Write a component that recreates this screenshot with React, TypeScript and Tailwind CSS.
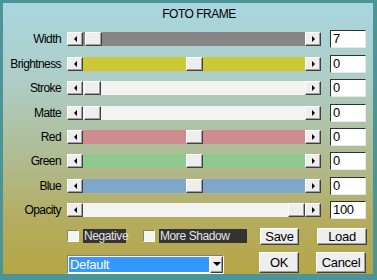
import React from 'react';

// スライダー行の定義（サムの位置はトラック左端からのpx）
interface SliderRow {
  label: string;
  track: string;
  thumb: number;
  value: string;
}

const ROWS: SliderRow[] = [
  { label: 'Width', track: 'bg-[#868686]', thumb: 2, value: '7' },
  { label: 'Brightness', track: 'bg-[#cec834]', thumb: 103, value: '0' },
  { label: 'Stroke', track: 'bg-[#f3f3f1]', thumb: 1, value: '0' },
  { label: 'Matte', track: 'bg-[#f3f3f1]', thumb: 1, value: '0' },
  { label: 'Red', track: 'bg-[#cd8d8f]', thumb: 103, value: '0' },
  { label: 'Green', track: 'bg-[#90c890]', thumb: 103, value: '0' },
  { label: 'Blue', track: 'bg-[#7fa7cc]', thumb: 103, value: '0' },
  { label: 'Opacity', track: 'bg-[#f3f3f1]', thumb: 205, value: '100' },
];

const raised =
  'bg-[#eeeeee] border border-t-white border-l-white border-b-[#404040] border-r-[#404040] shadow-[inset_-1px_-1px_0_#a0a0a0]';

const ArrowButton: React.FC<{ dir: 'left' | 'right' }> = ({ dir }) => (
  <div className={`w-[16px] h-[14px] flex items-center justify-center ${raised}`}>
    {dir === 'left' ? (
      <div className="w-0 h-0 border-y-[3px] border-y-transparent border-r-[3px] border-r-black" />
    ) : (
      <div className="w-0 h-0 border-y-[3px] border-y-transparent border-l-[3px] border-l-black" />
    )}
  </div>
);

const Slider: React.FC<{ row: SliderRow }> = ({ row }) => (
  <div className="flex h-[24.4px] items-center">
    <div className="w-[58px] text-right text-[12px] tracking-[-0.6px] text-black leading-none">
      {row.label}
    </div>
    <div className="ml-[6px] flex w-[254px]">
      <ArrowButton dir="left" />
      <div className={`flex-1 h-[14px] ${row.track}`}>
        <div className={`w-[17px] h-[14px] ${raised}`} style={{ marginLeft: row.thumb }} />
      </div>
      <ArrowButton dir="right" />
    </div>
    <div className="ml-[9px] w-[36px] h-[18px] bg-white border border-t-[#303030] border-l-[#303030] border-b-[#e8e8e8] border-r-[#e8e8e8] text-[13px] leading-[16px] pl-[2px] tracking-[-0.3px] text-black">
      {row.value}
    </div>
  </div>
);

const CheckItem: React.FC<{ label: string; width: string }> = ({ label, width }) => (
  <div className="flex items-center">
    <div className="w-[12px] h-[12px] bg-[#f4f4ee] border border-t-[#808080] border-l-[#808080] border-b-white border-r-white" />
    <div className={`ml-[4px] h-[14px] bg-[#333333] text-[#e4e4e4] text-[12px] leading-[14px] tracking-[-0.4px] pl-[1px] ${width}`}>
      {label}
    </div>
  </div>
);

const Button: React.FC<{ label: string; w: string; h: string }> = ({ label, w, h }) => (
  <div className={`${w} ${h} flex items-center justify-center text-[13px] tracking-[-0.3px] text-black ${raised}`}>
    {label}
  </div>
);

export default function App() {
  return (
    <div className="w-[377px] h-[280px] bg-[#4b9599] pt-[3px] pl-[3px] pr-[4px] pb-[6px] font-['Liberation_Sans',Arial,sans-serif]">
      <div className="w-full h-full flex flex-col bg-[linear-gradient(180deg,#a8d6e0_0%,#aecdc4_30%,#b0bb90_58%,#b4ab5c_82%,#b6a645_100%)]">
        <div className="h-[24.3px] pt-[4px] pl-[22px] text-center text-[12px] leading-[14px] tracking-[-0.5px] text-black">
          FOTO FRAME
        </div>
        {ROWS.map((row) => (
          <Slider key={row.label} row={row} />
        ))}
        <div className="mt-[5.5px] h-[17px] flex items-center pl-[64px]">
          <CheckItem label="Negative" width="w-[43px]" />
          <div className="ml-[17px]">
            <CheckItem label="More Shadow" width="w-[88px]" />
          </div>
          <div className="ml-[13px]">
            <Button label="Save" w="w-[39px]" h="h-[17px]" />
          </div>
          <div className="ml-[18px]">
            <Button label="Load" w="w-[50px]" h="h-[17px]" />
          </div>
        </div>
        <div className="mt-[7px] flex items-start pl-[64px]">
          <div className="mt-[3px] w-[157px] h-[19px] flex border border-t-[#808080] border-l-[#808080] border-b-white border-r-white">
            <div className="flex-1 bg-[#3399ff] border border-white text-white text-[13px] leading-[15px] tracking-[-0.3px] pl-[1px]">
              Default
            </div>
            <div className={`w-[13px] h-full flex items-center justify-center ${raised}`}>
              <div className="w-0 h-0 border-x-[4px] border-x-transparent border-t-[4px] border-t-black" />
            </div>
          </div>
          <div className="ml-[35px]">
            <Button label="OK" w="w-[40px]" h="h-[21px]" />
          </div>
          <div className="ml-[17px]">
            <Button label="Cancel" w="w-[50px]" h="h-[21px]" />
          </div>
        </div>
      </div>
    </div>
  );
}
